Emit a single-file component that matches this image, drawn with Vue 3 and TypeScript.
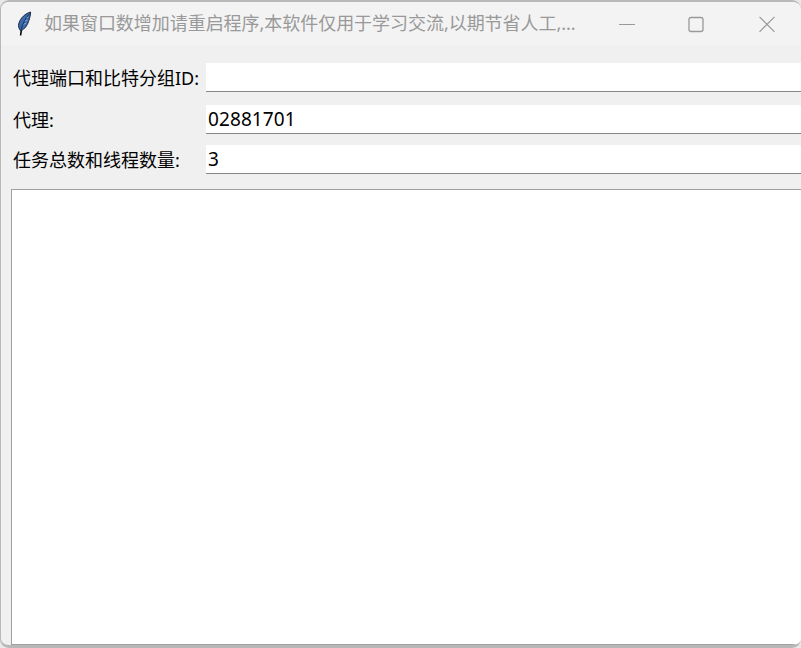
<script setup lang="ts">
interface Field {
  label: string
  value: string
}

const title = '如果窗口数增加请重启程序,本软件仅用于学习交流,以期节省人工,...'

const fields: Field[] = [
  { label: '代理端口和比特分组ID:', value: '' },
  { label: '代理:', value: '02881701' },
  { label: '任务总数和线程数量:', value: '3' },
]
</script>

<template>
  <div class="window">
    <header class="titlebar">
      <svg class="logo" width="16" height="26" viewBox="0 0 16 26" aria-hidden="true">
        <path d="M4.6 24.5 L5.6 17" stroke="#0a0a0a" stroke-width="1.6" fill="none" />
        <path d="M14.6 1 C9.5 2.4 4.4 6.8 2.8 12.4 C2.1 15 2.8 18 4.8 20 C8.8 18 11.3 14.4 12.5 10.6 C13.7 7 14.7 3.8 14.6 1 Z" fill="#3a69ad" stroke="#1b2a40" stroke-width="1" />
        <path d="M13.6 2.6 C9.8 6.8 6.6 12.4 5 19" stroke="#14233a" stroke-width="0.8" fill="none" />
        <path d="M12.4 6 L10.4 7 M11.6 9 L8.8 10 M10.4 12 L7.6 13.4" stroke="#9dbbe0" stroke-width="0.7" fill="none" />
      </svg>
      <span class="title">{{ title }}</span>
      <div class="controls">
        <svg class="ctl" width="46" height="20" viewBox="0 0 46 20" aria-hidden="true">
          <path d="M15 10.5 H31" stroke="#999" stroke-width="1.2" />
        </svg>
        <svg class="ctl" width="46" height="20" viewBox="0 0 46 20" aria-hidden="true">
          <rect x="15" y="3.5" width="14" height="14" rx="2" fill="none" stroke="#999" stroke-width="1.3" />
        </svg>
        <svg class="ctl" width="46" height="20" viewBox="0 0 46 20" aria-hidden="true">
          <path d="M15.5 2.8 L30.5 17.8 M30.5 2.8 L15.5 17.8" stroke="#999" stroke-width="1.2" />
        </svg>
      </div>
    </header>

    <main class="body">
      <div class="form">
        <div v-for="field in fields" :key="field.label" class="row">
          <label class="label">{{ field.label }}</label>
          <div class="entry">{{ field.value }}</div>
        </div>
      </div>
      <div class="output"></div>
    </main>
  </div>
</template>

<style>
html,
body {
  margin: 0;
  background: #e8e8e8;
}
</style>

<style scoped>
.window {
  box-sizing: border-box;
  width: 801px;
  height: 648px;
  display: flex;
  flex-direction: column;
  overflow: hidden;
  background: #f0f0f0;
  border: solid #b8b8b8;
  border-width: 2px 0 3px 1px;
  border-radius: 9px;
  font-family: "Noto Sans", "Noto Sans CJK SC", sans-serif;
}
.titlebar {
  flex: none;
  height: 43px;
  display: flex;
  align-items: center;
  background: #f3f3f3;
}
.logo {
  flex: none;
  margin: 0 11px 0 15px;
}
.title {
  flex: 1;
  margin: -3px 0 0 1px;
  font-size: 18px;
  letter-spacing: -0.04px;
  color: #999;
  white-space: nowrap;
  overflow: hidden;
}
.controls {
  flex: none;
  display: flex;
  gap: 24px;
  margin-right: 11px;
}
.ctl {
  display: block;
}
.body {
  flex: 1;
  min-height: 0;
  display: flex;
  flex-direction: column;
  padding: 18px 0 0 10px;
}
.form {
  display: flex;
  flex-direction: column;
  gap: 11px;
}
.row {
  display: flex;
  align-items: center;
  height: 29px;
}
.row:first-child {
  margin-bottom: 2px;
}
.label {
  flex: none;
  width: 193px;
  padding: 0 0 2px 2px;
  font-size: 18px;
  color: #000;
  white-space: nowrap;
}
.entry {
  box-sizing: border-box;
  flex: 1;
  height: 29px;
  padding: 0 2px;
  background: #fff;
  border-bottom: 1px solid #868686;
  font-size: 19px;
  letter-spacing: 0.1px;
  line-height: 28px;
  color: #000;
}
.output {
  flex: 1;
  min-height: 0;
  margin-top: 15px;
  background: #fff;
  border: solid #a0a0a0;
  border-width: 1px 0 1px 1px;
}
</style>
